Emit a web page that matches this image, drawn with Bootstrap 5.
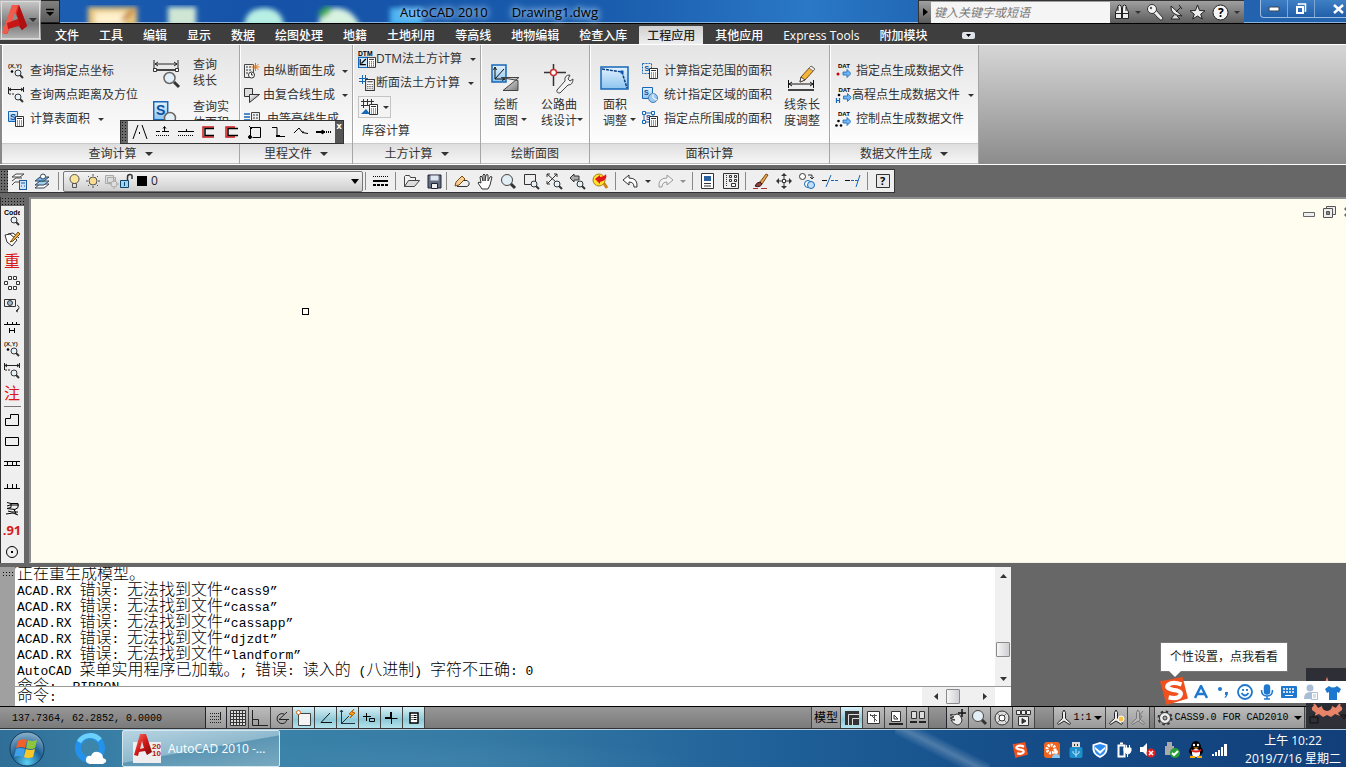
<!DOCTYPE html>
<html lang="zh-CN">
<head>
<meta charset="utf-8">
<meta name="viewport" content="width=device-width, initial-scale=1">
<title>AutoCAD 2010 Drawing1.dwg</title>
<link rel="stylesheet" href="https://cdn.jsdelivr.net/npm/bootstrap@5.3.0/dist/css/bootstrap.min.css">
<style>
:root{--ui:"Open Sans","Noto Sans CJK SC",sans-serif;--mono:"Liberation Mono","Noto Sans CJK SC",monospace}
body{font-family:var(--ui);font-size:12px;line-height:16px;color:#333;background:#676767;overflow:hidden}
svg{display:block;flex:none}
button,.btn{--bs-btn-padding-x:0;--bs-btn-padding-y:0;--bs-btn-font-size:12px;--bs-btn-line-height:16px;--bs-btn-border-width:0;--bs-btn-border-radius:0;--bs-btn-color:#333;--bs-btn-font-family:var(--ui);position:relative}
.btn{display:inline-flex;align-items:center;justify-content:center;flex:none}
.caret{width:0;height:0;border:3px solid transparent;border-top-color:#333;border-bottom:0;flex:none}
.caret-lg{border-width:4px 4px 0}

/* title bar */
.titlebar{height:24px;background:linear-gradient(90deg,#1e62b4,#1552a8 20%,#1a5cad 45%,#2a78c6 60%,#1d62b0 72%,#2463ae);border-bottom:1px solid #000;box-shadow:inset 0 -1px #8db4dc}
.desk{position:absolute;left:60px;top:0}
.quick{width:20px;height:23px;margin-left:40px;background:linear-gradient(#808080,#5a5a5a);border:1px solid #222}
.wtitle{color:#000;font-size:13px;padding-left:20px;text-shadow:0 0 5px #9cc6f0,0 0 8px #9cc6f0,0 0 8px #9cc6f0}
.info{background:linear-gradient(#a0a0a0,#5c5c5c);height:23px;width:326px;border-left:1px solid #333;border-top:1px solid #333}
.info input{width:179px;height:21px;border:0;border-radius:0;background:#f5f5f5;font-size:12px;line-height:16px;font-style:italic;padding:2px 3px;min-height:0}
.info input::placeholder{color:#777}
.info .opener{width:12px}
.winbtns{width:86px;height:18px;border:1px solid #9dbde0;border-top:0;border-right:0;border-radius:0 0 0 4px;background:linear-gradient(#3f7fc4,#2160aa)}
.winbtns .btn{width:27px;height:17px;border-right:1px solid #7fa7d6}
.winbtns .btn:last-child{width:44px;border:0}
.applogo{position:absolute;left:0;top:0;width:41px;height:40px;background:linear-gradient(#c9c9c9,#777 60%,#b5b5b5);border:1px solid #222;box-shadow:inset 0 0 0 1px #ddd;z-index:5;justify-content:flex-start}

/* menu */
.menubar{height:20px;background:#3e3e3e;padding-left:45px}
.menubar .nav-link{color:#fff;font-size:12px;line-height:16px;font-weight:500;padding:2px 8px 0;margin:2px 2px 0;height:18px;border-radius:0;white-space:nowrap}
.menubar .nav-link.active{color:#222;background:linear-gradient(#cfcfcf,#eee);border-radius:1px 1px 0 0}

/* ribbon */
.ribbon{height:121px;background:linear-gradient(#d6d6d6,#8c8c8c);border-top:1px solid #fff;border-bottom:1px solid #fff;padding-left:2px;box-shadow:inset 2px 0 #888}
.panel{height:119px;border-right:1px solid #a6a6a6;box-shadow:inset 1px 0 #fff}
.panel-body{height:98px;background:linear-gradient(#e4e4e4,#fdfdfd);padding:14px 0 0 5px;border-left:1px solid #fff}
.panel-foot{height:21px;background:linear-gradient(#dedede,#f6f6f6);border-top:1px solid #cacaca;border-bottom:1px solid #bbb}
.rowbtn{height:24px;gap:6px;justify-content:flex-start;white-space:nowrap}
.rowbtn .caret{margin-left:2px}
.sidebtn{height:42px;gap:12px;text-align:left;justify-content:flex-start;align-items:flex-start}
.sidebtn span{margin-top:-2px}
.bigbtn{flex-direction:column;height:72px;gap:2px;margin-top:4px;align-items:center;justify-content:flex-start;white-space:nowrap}
.bigbtn .caret{position:absolute;right:-6px;bottom:14px}
.p1{width:238px}.p2{width:113px}.p3{width:128px}.p4{width:109px}.p5{width:240px}.p6{width:149px}
.c1{width:145px}
.p2 .panel-body{padding-left:3px}.p2 .rowbtn{gap:3px}
.p3 .panel-body{padding:2px 0 0 4px}
.p4 .panel-body{padding-left:9px;gap:20px}
.p5 .panel-body{padding-left:9px}
.p6 .panel-body{padding-left:4px}.p6 .rowbtn{gap:5px}
.split{width:33px;height:22px;margin:1px 0;border:1px solid #c4c4c4;background:#f3f3f3;gap:5px}
.floatbar{position:absolute;left:120px;top:120px;width:224px;height:24px;border:1px solid #333;background:#f0f0f0;z-index:4}
.floatbar .btn{width:23px;height:22px}
.grip{background:radial-gradient(circle,#111 1px,transparent 1px) 0 0/3px 3px #6a6a6a}
.floatbar .grip{width:7px;height:22px}
.floatbar .closer{width:8px;height:22px;background:#555;color:#fff;font-size:9px;font-weight:700;line-height:10px;align-items:flex-start}

/* tool strip */
.strip{height:32px;padding-top:4px}
.toolrow{height:24px;background:#efefef;border:1px solid #333;border-left:0;width:max-content}
.toolrow>.grip{width:8px;height:22px}
.toolrow .btn{width:23px;height:22px}
.toolrow .btn.drop{width:12px}
.toolrow .btn.ltype{width:29px}
.sep{width:1px;height:18px;background:#888;margin:0 3px;flex:none}
.layer{width:300px;height:21px;border:1px solid #777;background:linear-gradient(#f4f4f4,#cfcfcf);padding:0 3px 0 4px;margin:0 2px 0 0;border-radius:2px}
.layer select{border:0;background:transparent;min-height:0;height:18px;padding:0 14px 0 4px;font:12px/16px var(--ui);color:#222;flex:1;min-width:0;appearance:none;background:url("data:image/svg+xml,%3Csvg xmlns='http://www.w3.org/2000/svg' width='8' height='5'%3E%3Cpath d='M0 0h8l-4 5z'/%3E%3C/svg%3E") right center no-repeat}

/* drawing area */
.work{min-height:0}
.sidebar-tools{width:24px;background:#efefef;border-left:1px solid #333;flex:none}
.sidebar-tools .grip{height:9px}
.sidebar-tools .btn{height:22px;width:22px}
.sidebar-tools hr{margin:2px 3px;border-color:#777;opacity:1;height:0}
.sidebar-tools .redcn{color:#d81818;--bs-btn-font-size:16px}
.sidebar-tools .rednum{color:#d81818;--bs-btn-font-size:13px;font-weight:700}
.canvas{background:#fffcf0;margin-left:5px;border:2px solid #8e8e8e;border-right:0;border-bottom-color:#f4f0e4;border-width:2px 0 1px 2px;min-height:0;outline:0}
.pick{position:absolute;left:271px;top:109px;width:7px;height:7px;border:1px solid #000}
.mdi{position:absolute;right:-10px;top:6px;gap:8px}

/* command line */
.cmd{height:139px;margin-top:4px}
.cmd-grip{width:15px;background:#a0a0a0;padding:4px 2px}
.cmd-grip i{display:block;height:5px;background:radial-gradient(circle,#111 1px,transparent 1px) 0 0/3px 3px}
.cmd-box{width:996px;background:#fff;color:#000;border-radius:3px 0 0 0}
.history{height:119px;overflow:hidden;padding:0 0 0 2px}
.history div{font:300 16px/16px var(--mono);height:16px;white-space:pre}
.history code,.cmd-in label code{font:13px/1px var(--mono);color:#000}
.vbar{width:16px;background:#f0f0f0;height:119px;padding:7px 0 5px}
.thumb{width:14px;height:15px;border:1px solid #8a8a8a;background:linear-gradient(90deg,#f6f6f6,#cfcfd3);border-radius:1px}
.vbar .thumb{margin:auto 0 20px}
.cmd-in{height:20px;border-top:1px solid #999}
.cmd-in label{font:300 16px/18px var(--mono);padding-left:2px}
.cmd-in input{border:0;height:18px;min-height:0;padding:0;flex:1;background:transparent;border-radius:0;font:13px/16px var(--mono)}
.hbar{width:73px;height:19px;background:#f0f0f0;margin-right:16px;padding:0 8px 0 12px}

/* status bar */
.status{height:23px;background:linear-gradient(#979797,#7a7a7a);border-top:1px solid #000;border-bottom:1px solid #333;font:10px/16px var(--mono);color:#000}
.status .coords{width:205px;padding:2px 0 0 12px}
.status .btn{height:21px;width:22px;border-right:1px solid #444;background:linear-gradient(#bdbdbd,#999);color:#000;--bs-btn-font-size:10px;--bs-btn-font-family:var(--mono)}
.status .btn.on{background:linear-gradient(#d9f0f5,#8fcad8 60%,#b4e3ec)}
.status .btn.cn{width:30px;--bs-btn-font-size:12px;--bs-btn-font-family:var(--ui);background:linear-gradient(#aaa,#909090);border-left:1px solid #444}
.status .gap{width:18px}
.status .scale{width:53px;gap:2px;border-left:1px solid #444}
.status .ws{width:151px;gap:1px;border-left:1px solid #444}
.status .under{width:41px}
.ws .caret,.scale .caret{border-top-color:#000}

/* taskbar */
.taskbar{height:38px;background:linear-gradient(27deg,transparent 38%,#ffffff3c 50%,transparent 62%) 895px 0/95px 38px no-repeat,radial-gradient(ellipse 260px 20px at 430px 30px,#4c8fb555,transparent),linear-gradient(90deg,#2f6e97,#3d86ab 12%,#357aa4 36%,#1f6099 58%,#154d89 76%,#123f79);border-top:1px solid #b5d0e2;color:#fff}
.start{margin-left:8px}.browser{margin-left:27px}
.task{width:158px;height:37px;border:1px solid #d4e6ee;background:linear-gradient(170deg,#b7d4e2,#8fb9cd 50%,#5c96b4 52%,#78a9c0);--bs-btn-color:#fff;--bs-btn-font-size:12px;justify-content:flex-start;gap:6px;padding-left:9px;border-radius:2px;margin-left:15px}
.tray{gap:8px;padding-top:2px}
.clock{width:100px;text-align:center;line-height:18px;color:#fff;margin:0 3px 0 7px;white-space:nowrap}

/* input method */
.tip{position:absolute;right:58px;bottom:95px;background:#fff;border:1px solid #777;width:128px;height:30px;line-height:28px;text-align:center;color:#222;z-index:7;white-space:nowrap}
.tip::after{content:"";position:absolute;left:8px;top:28px;border:6px solid transparent;border-top-color:#fff;border-bottom:0}
.ime{position:absolute;right:0;bottom:64px;width:174px;height:22px;background:#fff;z-index:7;padding-left:18px}
.ime .btn{width:22px;height:22px}
.imelogo{position:absolute;right:157px;bottom:61px;z-index:8}
.crab{position:absolute;right:0;bottom:38px;z-index:6}
</style>
</head>
<body class="d-flex flex-column vh-100 position-relative">

<svg width="0" height="0" class="position-absolute" aria-hidden="true">
<defs>
<linearGradient id="gBlue" x1="0" y1="0" x2="0" y2="1"><stop offset="0" stop-color="#e4f2fd"/><stop offset="1" stop-color="#8cc4f0"/></linearGradient>
<linearGradient id="gGray" x1="0" y1="0" x2="1" y2="1"><stop offset="0" stop-color="#fff"/><stop offset="1" stop-color="#777"/></linearGradient>
<linearGradient id="gRed" x1="0" y1="0" x2="1" y2="1"><stop offset="0" stop-color="#ff7a6a"/><stop offset=".5" stop-color="#d01818"/><stop offset="1" stop-color="#7a0808"/></linearGradient>
<symbol id="mag" viewBox="0 0 10 10"><circle cx="4" cy="4" r="3" fill="#e6f1f8" stroke="#333"/><path d="M6 6l3 3" stroke="#333" stroke-width="2"/></symbol>
<symbol id="bigmag" viewBox="0 0 17 17"><path d="M10 10l5 5" stroke="#333" stroke-width="3"/><circle cx="7" cy="7" r="5.500" fill="#e2eff6" stroke="#444"/></symbol>
<symbol id="calc" viewBox="0 0 9 11"><path d="M.5.5h8v10h-8z" fill="#fff" stroke="#333"/><path d="M2 2.500h5M2 5h1M4 5h1M6 5h1M2 7h1M4 7h1M6 7h1M2 9h1M4 9h1M6 9h1" stroke="#333"/></symbol>
<symbol id="xy" viewBox="0 0 16 16"><text x="0" y="5" font-size="6" font-weight="700" font-family="Liberation Sans" fill="#222">(X,Y)</text><circle cx="4" cy="8.500" r="1.300"/><use href="#mag" x="6" y="6" width="10" height="10"/></symbol>
<symbol id="dist" viewBox="0 0 16 16"><path d="M.5 0v7M15.500 0v5M1 2.500h14M3 1L1 2.500 3 4M13 1l2 1.500L13 4" fill="none" stroke="#222"/><path d="M1 7h6" stroke="#222" stroke-dasharray="2 1"/><use href="#mag" x="6" y="6" width="10" height="10"/></symbol>
<symbol id="scalc" viewBox="0 0 16 16"><path d="M.5.5h9v10h-9z" fill="url(#gBlue)" stroke="#1667b7"/><text x="2" y="9" font-size="9" font-weight="700" font-family="Liberation Sans" fill="#0b4f9e">S</text><use href="#calc" x="7" y="5" width="9" height="11"/></symbol>
<symbol id="bigdist" viewBox="0 0 28 32"><path d="M1 1v9M25 1v9M2 5h22M5 3L2 5l3 2M21 3l3 2-3 2" fill="none" stroke="#222"/><path d="M2 11h22" stroke="#444" stroke-width="2"/><path d="M.5 9.500h3v3h-3zM22.500 9.500h3v3h-3z" fill="#fff" stroke="#333"/><path d="M21 23l5 5" stroke="#333" stroke-width="3"/><circle cx="16.500" cy="19" r="5.500" fill="#e2eff6" stroke="#666" stroke-width="1.500"/></symbol>
<symbol id="bigS" viewBox="0 0 28 32"><path d="M.7.7h14v18H.7z" fill="url(#gBlue)" stroke="#1667b7" stroke-width="1.500"/><text x="3" y="14" font-size="14" font-weight="700" font-family="Liberation Sans" fill="#0b4f9e">S</text><circle cx="17" cy="17" r="5.500" fill="#e2eff6" stroke="#666" stroke-width="1.500"/></symbol>
<symbol id="m1" viewBox="0 0 16 16"><path d="M.5 1.500h9v13h-9z" fill="#eee" stroke="#444"/><path d="M2 4h2M2 7h2M2 10h2M5 4h2M5 7h2" stroke="#333"/><circle cx="7.500" cy="12" r="3" fill="#fff" stroke="#333"/><path d="M7.500 10v2H9" fill="none" stroke="#333"/><path d="M11.500 0v8M7.500 4h8M8.700 1.200l5.600 5.600M14.300 1.200L8.700 6.800" stroke="#e07818"/></symbol>
<symbol id="m2" viewBox="0 0 16 16"><path d="M.5 1.500h8v8h-8z" fill="#ddd" stroke="#333"/><path d="M5.500 15.500v-8h10z" fill="url(#gGray)" stroke="#333"/></symbol>
<symbol id="m3" viewBox="0 0 16 16"><path d="M0 3h6M0 6h6M0 9h6M0 12h6" fill="none" stroke="#1667b7" stroke-width="1.500"/><path d="M7.500 1.500h8v13h-8z" fill="#eee" stroke="#444"/><path d="M9 4h2M9 7h2M9 10h2M12 4h2M12 7h2" stroke="#333"/></symbol>
<symbol id="dtm" viewBox="0 0 16 16"><text x="0" y="5" font-size="6" font-weight="700" font-family="Liberation Sans" fill="#000">DTM</text><path d="M.5 6.500h8v9h-8z" fill="#cfe5f8" stroke="#1667b7"/><path d="M2 8v5h5M3 12l4-4" fill="none" stroke="#000"/><use href="#calc" x="8" y="6" width="8" height="10"/></symbol>
<symbol id="sect" viewBox="0 0 16 16"><path d="M3.500 0v9M6.500 0v6M0 3.500h9M0 6.500h6" stroke="#1667b7"/><use href="#calc" x="6" y="4" width="10" height="12"/></symbol>
<symbol id="gridc" viewBox="0 0 17 16"><path d="M2.500 0v9M6.500 0v7M10.500 0v5M0 2.500h13M0 6.500h9" stroke="#333"/><path d="M0 15l5-5 4 5z" fill="#1667b7"/><use href="#calc" x="8" y="5" width="9" height="11"/></symbol>
<symbol id="draw" viewBox="0 0 30 30"><path d="M1 1h14v17H1z" fill="url(#gBlue)" stroke="#1667b7" stroke-width="1.500"/><path d="M4 4v11h9M4 15L13 5M2.500 6L4 3l1.500 3M11 13.500l3 1.500-3 1.500" fill="none" stroke="#111"/><path d="M10 13.500h18L12 26.500h15v-10z" fill="url(#gGray)" stroke="#444"/></symbol>
<symbol id="road" viewBox="0 0 30 30"><path d="M9.500 0v22M0 8.500h22" stroke="#333" stroke-width="1.500"/><circle cx="9.500" cy="8.500" r="3" fill="#fff" stroke="#c33" stroke-width="1.500"/><path d="M13 26l8-9q-1-6 5-6l-2 4 2 2 3-2q0 6-5 6l-8 8q-4 0-3-3z" fill="#f4f4f4" stroke="#444"/></symbol>
<symbol id="areaadj" viewBox="0 0 30 30"><path d="M1 3h27v22H1z" fill="url(#gBlue)" stroke="#1667b7" stroke-width="1.500"/><path d="M2 5l20 3 5 16" fill="none" stroke="#0a3f86" stroke-width="1.500" stroke-dasharray="3 1"/><path d="M20.500 6.500h3v3h-3z" fill="#0a56b0"/></symbol>
<symbol id="a1" viewBox="0 0 16 16"><path d="M.5.5h9v10h-9z" fill="none" stroke="#1667b7" stroke-dasharray="2 1"/><text x="2.500" y="8" font-size="7" font-weight="700" font-family="Liberation Sans" fill="#0b4f9e">S</text><use href="#calc" x="7" y="5" width="9" height="11"/></symbol>
<symbol id="a2" viewBox="0 0 16 16"><path d="M.5.5h10v11H.5z" fill="url(#gBlue)" stroke="#1667b7"/><text x="2" y="8" font-size="7" font-weight="700" font-family="Liberation Sans" fill="#0b4f9e">S</text><circle cx="11" cy="11" r="4.500" fill="#9cc8ee" stroke="#4a7caf"/><path d="M11 11V6.500M11 11l4 2" stroke="#fff"/></symbol>
<symbol id="a3" viewBox="0 0 16 16"><path d="M2 2h9v9H2z" fill="none" stroke="#1667b7"/><path d="M.5.5h3v3h-3zM9.500.5h3v3h-3zM.5 9.500h3v3h-3z" fill="#fff" stroke="#1667b7"/><text x="4" y="9" font-size="7" font-weight="700" font-family="Liberation Sans" fill="#0b4f9e">S</text><use href="#calc" x="7" y="5" width="9" height="11"/></symbol>
<symbol id="pencil" viewBox="0 0 30 30"><path d="M14 13l10-11 4 3-10 11-5 2z" fill="#f4b63a" stroke="#7a4a10"/><path d="M24 2l4 3-2 2-4-3z" fill="#eee" stroke="#777"/><path d="M13 18l1-5 4 3z" fill="#fff" stroke="#444"/><path d="M1.500 16v8M26.500 16v8M2 20h24M5 18l-3 2 3 2M23 18l3 2-3 2" fill="none" stroke="#111"/><path d="M1 26h26" stroke="#444" stroke-width="2"/></symbol>
<symbol id="datb" viewBox="0 0 16 16"><text x="3" y="5" font-size="6" font-weight="700" font-family="Liberation Sans">DAT</text><path d="M8 9h4V6.500l4 4-4 4V12H8z" fill="#6db4f0" stroke="#1667b7" stroke-width=".8"/></symbol>
<symbol id="d1" viewBox="0 0 16 16"><use href="#datb" width="16" height="16"/><circle cx="3" cy="11" r="1.500" fill="#c00"/></symbol>
<symbol id="d2" viewBox="0 0 16 16"><use href="#datb" width="16" height="16"/><circle cx="3.500" cy="8" r="1.300"/><path d="M1 11v5M4 11v5M1 13.500h3" stroke="#1667b7" stroke-width="1.200"/></symbol>
<symbol id="d3" viewBox="0 0 16 16"><use href="#datb" width="16" height="16"/><circle cx="3.500" cy="10" r="1.300"/><circle cx="1.500" cy="14.500" r="1.300"/><circle cx="6" cy="14.500" r="1.300"/></symbol>
</defs>
</svg>

<header class="titlebar d-flex position-relative">
  <svg class="desk" width="400" height="23" viewBox="0 0 400 23"><defs><filter id="soft"><feGaussianBlur stdDeviation="2.500"/></filter></defs><g filter="url(#soft)"><path d="M28 7h49v19H28z" fill="#e8c47c"/><path d="M35 12h30v14H35z" fill="#fff1cc"/><path d="M62 20l12-10" stroke="#b86820" stroke-width="3"/><path d="M108 7h28v19h-28z" fill="#cfe6d4"/><path d="M184 26q2-18 20-18t20 18z" fill="#b8efe4"/><path d="M258 26q2-18 18-18t24 18z" fill="#d8f2e0"/><path d="M260 16l10-8" stroke="#3fae58" stroke-width="7"/><path d="M330 26V8h32v18z" fill="#4cb2f0"/></g></svg>
  <button class="btn quick" aria-label="快速访问"><svg width="10" height="8"><path d="M1 1.500h8" stroke="#000" stroke-width="1.500"/><path d="M1 4h8L5 8z"/></svg></button>
  <div class="wtitle flex-grow-1 d-flex justify-content-center align-items-center gap-4 position-relative"><span>AutoCAD 2010</span><span>Drawing1.dwg</span></div>
  <div class="info d-flex align-items-center position-relative">
    <button class="btn opener" aria-label="展开"><svg width="5" height="8"><path d="M0 0v8l5-4z"/></svg></button>
    <input class="form-control" aria-label="搜索" placeholder="键入关键字或短语">
    <div class="d-flex flex-grow-1 align-items-center justify-content-between px-1">
      <button class="btn" aria-label="搜索"><svg width="16" height="16" fill="#eee" stroke="#222"><path d="M3.500 4q0-3 2-3t2 3v10.500h-6V8zM8.500 4q0-3 2-3t2 3l2 4v6.500h-6z"/><path d="M1.500 9.500h13M7 5.500h2M4 3v4M12 3v4"/></svg></button><i class="caret"></i>
      <button class="btn" aria-label="密钥"><svg width="17" height="17"><path d="M9 6l7 8-1 2h-2l-1.500-2-1.500-.5-.5-1.500L6 9z" fill="#eee" stroke="#333"/><circle cx="5" cy="5" r="4.500" fill="#f4f4f4" stroke="#333"/><circle cx="4" cy="4" r="1.200" fill="#555"/></svg></button>
      <button class="btn" aria-label="通讯中心"><svg width="15" height="16"><path d="M2 2q-1 9 11 10z" fill="#eee" stroke="#222"/><path d="M7 8l5-5M10 1l3 4M5 11l-3 4h9l-3-3" fill="#ddd" stroke="#222"/></svg></button>
      <button class="btn" aria-label="收藏夹"><svg width="17" height="16"><path d="M8.500 1l2 5.500 5.500.3-4.300 3.400L13.300 15 8.500 12 3.700 15l1.600-4.800L1 6.800l5.500-.3z" fill="#eee" stroke="#222"/></svg></button>
      <button class="btn" aria-label="帮助"><svg width="17" height="17"><circle cx="8.500" cy="8.500" r="7.500" fill="#f5f5f5" stroke="#222"/><text x="6" y="13" font-size="12" font-weight="700" font-family="Open Sans">?</text></svg></button><i class="caret"></i>
    </div>
  </div>
  <div class="winbtns d-flex ms-3 position-relative">
    <button class="btn" aria-label="最小化"><svg width="12" height="6"><path d="M1 1h10v4H1z" fill="#fff" stroke="#345"/></svg></button>
    <button class="btn" aria-label="还原"><svg width="12" height="12" fill="none" stroke="#fff"><path d="M3.500 2V1h7v7h-1" stroke-width="1.500"/><path d="M2 4h6v6H2z" stroke-width="2"/></svg></button>
    <button class="btn" aria-label="关闭"><svg class="ms-1" width="12" height="10"><path d="M1 1l9 8M10 1L1 9" stroke="#fff" stroke-width="2.500"/></svg></button>
  </div>
  <button class="btn applogo" aria-label="应用程序菜单"><svg width="28" height="34" viewBox="0 0 28 34"><path d="M11 2h7l8 21-5 4-4-5-8 2-3 7-4-1z" fill="url(#gRed)"/><path d="M11 2h6l-3 9-5 12-3 8-5-1z" fill="#f25a4c"/><path d="M6 20l12-4 3 6-14 4z" fill="#c81616"/><path d="M14 9l3 7-6 2z" fill="#8f8f8f"/><path d="M18 2l8 21-5 4-3-8-2-8z" fill="#b01010"/></svg><i class="caret caret-lg"></i></button>
</header>

<nav class="menubar nav flex-nowrap align-items-start">
  <a class="nav-link" href="#">文件</a><a class="nav-link" href="#">工具</a><a class="nav-link" href="#">编辑</a><a class="nav-link" href="#">显示</a><a class="nav-link" href="#">数据</a><a class="nav-link" href="#">绘图处理</a><a class="nav-link" href="#">地籍</a><a class="nav-link" href="#">土地利用</a><a class="nav-link" href="#">等高线</a><a class="nav-link" href="#">地物编辑</a><a class="nav-link" href="#">检查入库</a><a class="nav-link active" href="#" aria-current="page">工程应用</a><a class="nav-link" href="#">其他应用</a><a class="nav-link" href="#">Express Tools</a><a class="nav-link" href="#">附加模块</a>
  <button class="btn ms-4 mt-2" aria-label="最小化功能区"><svg width="13" height="7"><rect width="13" height="7" rx="2" fill="#dfe3ea"/><path d="M4 2h5L6.500 5z"/></svg></button>
</nav>

<section class="ribbon d-flex">
  <div class="panel p1">
    <div class="panel-body d-flex">
      <div class="c1 d-flex flex-column align-items-start">
        <button class="btn rowbtn"><svg width="16" height="16"><use href="#xy"/></svg>查询指定点坐标</button>
        <button class="btn rowbtn"><svg width="16" height="16"><use href="#dist"/></svg>查询两点距离及方位</button>
        <button class="btn rowbtn"><svg width="16" height="16"><use href="#scalc"/></svg>计算表面积<i class="caret"></i></button>
      </div>
      <div class="d-flex flex-column">
        <button class="btn sidebtn"><svg width="28" height="32"><use href="#bigdist"/></svg><span>查询<br>线长</span></button>
        <button class="btn sidebtn"><svg width="28" height="32"><use href="#bigS"/></svg><span>查询实<br>体面积</span></button>
      </div>
    </div>
    <div class="panel-foot d-flex align-items-center justify-content-center gap-2">查询计算<i class="caret caret-lg"></i></div>
  </div>
  <div class="panel p2">
    <div class="panel-body d-flex flex-column align-items-start">
      <button class="btn rowbtn"><svg width="16" height="16"><use href="#m1"/></svg>由纵断面生成<i class="caret ms-1"></i></button>
      <button class="btn rowbtn"><svg width="16" height="16"><use href="#m2"/></svg>由复合线生成<i class="caret ms-1"></i></button>
      <button class="btn rowbtn"><svg width="16" height="16"><use href="#m3"/></svg><span class="ps-1">由等高线生成</span></button>
    </div>
    <div class="panel-foot d-flex align-items-center justify-content-center gap-2">里程文件<i class="caret caret-lg"></i></div>
  </div>
  <div class="panel p3">
    <div class="panel-body d-flex flex-column align-items-start">
      <button class="btn rowbtn gap-0"><svg width="18" height="18"><use href="#dtm"/></svg>DTM法土方计算<i class="caret ms-2"></i></button>
      <button class="btn rowbtn gap-0"><svg width="18" height="16"><use href="#sect"/></svg>断面法土方计算<i class="caret ms-2"></i></button>
      <button class="btn split" aria-label="方格网法"><svg width="17" height="16"><use href="#gridc"/></svg><i class="caret"></i></button>
      <button class="btn ms-1 mt-1">库容计算</button>
    </div>
    <div class="panel-foot d-flex align-items-center justify-content-center gap-2">土方计算<i class="caret caret-lg"></i></div>
  </div>
  <div class="panel p4">
    <div class="panel-body d-flex">
      <button class="btn bigbtn"><svg width="30" height="32"><use href="#draw"/></svg><span>绘断<br>面图</span><i class="caret"></i></button>
      <button class="btn bigbtn"><svg width="30" height="32"><use href="#road"/></svg><span>公路曲<br>线设计</span><i class="caret"></i></button>
    </div>
    <div class="panel-foot d-flex align-items-center justify-content-center">绘断面图</div>
  </div>
  <div class="panel p5">
    <div class="panel-body d-flex">
      <button class="btn bigbtn"><svg width="30" height="32"><use href="#areaadj"/></svg><span>面积<br>调整</span><i class="caret"></i></button>
      <div class="d-flex flex-column align-items-start mx-2 px-1">
        <button class="btn rowbtn"><svg width="16" height="16"><use href="#a1"/></svg>计算指定范围的面积</button>
        <button class="btn rowbtn"><svg width="16" height="16"><use href="#a2"/></svg>统计指定区域的面积</button>
        <button class="btn rowbtn"><svg width="16" height="16"><use href="#a3"/></svg>指定点所围成的面积</button>
      </div>
      <button class="btn bigbtn"><svg width="30" height="32"><use href="#pencil"/></svg><span>线条长<br>度调整</span></button>
    </div>
    <div class="panel-foot d-flex align-items-center justify-content-center">面积计算</div>
  </div>
  <div class="panel p6">
    <div class="panel-body d-flex flex-column align-items-start">
      <button class="btn rowbtn"><svg width="16" height="16"><use href="#d1"/></svg>指定点生成数据文件</button>
      <button class="btn rowbtn gap-0"><svg width="17" height="16"><use href="#d2"/></svg>高程点生成数据文件<i class="caret ms-2"></i></button>
      <button class="btn rowbtn"><svg width="16" height="16"><use href="#d3"/></svg>控制点生成数据文件</button>
    </div>
    <div class="panel-foot d-flex align-items-center justify-content-center gap-2">数据文件生成<i class="caret caret-lg"></i></div>
  </div>
</section>

<div class="floatbar d-flex" role="toolbar" aria-label="CASS">
  <i class="grip"></i>
  <button class="btn" aria-label="陡坎"><svg width="16" height="16" stroke="#000" fill="none"><path d="M1 15L6 1M15 15L10 1M7.500 8v2"/></svg></button>
  <button class="btn" aria-label="加固坎"><svg width="16" height="16" stroke="#000" fill="none"><path d="M1 7.500h4M7 7.500h7M9.500 7V3M8 4.500l1.500-2L11 4.500"/><path d="M1 11.500h14" stroke-dasharray="1 1"/></svg></button>
  <button class="btn" aria-label="围墙"><svg width="16" height="16" stroke="#000" fill="none"><path d="M0 7.500h16M8.500 5v3"/><path d="M0 11.500h16" stroke-dasharray="1 1"/></svg></button>
  <button class="btn" aria-label="隔点"><svg width="16" height="16" fill="none"><path d="M13 3H2v10h11" stroke="#d01818" stroke-width="1.500"/><path d="M13 4.500H4v7h9" stroke="#000" stroke-width="1.500"/></svg></button>
  <button class="btn" aria-label="闭合"><svg width="16" height="16" fill="none"><path d="M11 3H2v10h9" stroke="#d01818" stroke-width="1.500"/><path d="M14 4.500H4v7h10" stroke="#000" stroke-width="1.500"/></svg></button>
  <button class="btn" aria-label="微导线"><svg width="16" height="16" stroke="#000" fill="none"><path d="M3.500 13.500v-10h10v10h-8M2 2l3 3"/><circle cx="3" cy="13" r="1.500" fill="#000"/></svg></button>
  <button class="btn" aria-label="直角"><svg width="16" height="16" stroke="#000" fill="none"><path d="M2 3.500h5v9h8"/><path d="M6 12h4" stroke-width="2"/></svg></button>
  <button class="btn" aria-label="折线"><svg width="16" height="16" stroke="#000" fill="none"><path d="M1 9l5-5 3 4h2M9 8.500l6 1"/></svg></button>
  <button class="btn" aria-label="延伸"><svg width="16" height="16" stroke="#000" fill="none"><path d="M0 8h8" stroke-width="2"/><path d="M8 8h8" stroke-dasharray="1 1" stroke-width="2"/><path d="M6 6l3 2-3 2z" fill="#000"/></svg></button>
  <button class="btn closer ms-auto" aria-label="关闭">x</button>
</div>

<div class="strip">
  <div class="toolrow d-flex align-items-center" role="toolbar">
    <i class="grip"></i>
    <button class="btn" aria-label="图层特性"><svg width="17" height="17" fill="#fff" stroke="#444"><path d="M1 4l4-3h8l-4 3zM1 8l4-3h6M1 12l3-3h4"/><rect x="8.500" y="7.500" width="7" height="9" stroke="#1a5a9a" fill="#cfe3f5"/><path d="M10 10h4M10 13h1M13 13h1" stroke="#1a5a9a"/></svg></button>
    <button class="btn" aria-label="图层匹配"><svg width="17" height="17" fill="#fff" stroke="#345"><path d="M1 15l5-4h9l-5 4z"/><path d="M1 12l5-4h9l-5 4z" fill="#9fd0f0"/><path d="M1 8l5-4h9l-5 4z" fill="#6db4f0"/><circle cx="9" cy="3.500" r="2.500"/></svg></button>
    <i class="sep mx-1"></i>
    <div class="layer d-flex align-items-center">
      <svg width="14" height="16"><circle cx="6.500" cy="6" r="4.500" fill="#fde79a" stroke="#555"/><path d="M4.500 10.500h4v4h-4z" fill="#ddd" stroke="#555"/></svg>
      <svg class="ms-1" width="14" height="14"><circle cx="7" cy="7" r="4" fill="#fbdc8c" stroke="#555"/><path d="M7 0v2M7 12v2M0 7h2M12 7h2M2 2l1 1M11 11l1 1M12 2l-1 1M3 11l-1 1" stroke="#555"/></svg>
      <svg class="ms-1" width="15" height="15" fill="#ddd" stroke="#aaa"><path d="M1.500 1.500h8v8h-8zM3.500 3.500h8v5h-8z"/><circle cx="10" cy="10" r="3"/><path d="M10 5v2M10 13v2M5 10h2M13 10h2"/></svg>
      <svg width="14" height="16"><path d="M8.500 8V4q0-2.500 2.500-2.500T13 4v2" fill="none" stroke="#333" stroke-width="1.500"/><path d="M1.500 7.500h8v7h-8z" fill="#9fd4f2" stroke="#146"/><path d="M5.500 9v4" stroke="#146"/></svg>
      <svg class="ms-1" width="10" height="10"><path d="M0 0h10v10H0z"/></svg>
      <select class="form-select" aria-label="图层"><option>0</option></select>
    </div>
    <i class="sep m-0"></i>
    <button class="btn ltype" aria-label="线型"><svg width="15" height="12" stroke="#000"><path d="M0 1.500h15" stroke-dasharray="1 1"/><path d="M0 6h15" stroke-width="2"/><path d="M0 10h15" stroke-width="2" stroke-dasharray="3 1"/></svg></button>
    <i class="sep ms-0 me-1"></i>
    <button class="btn" aria-label="打开"><svg width="17" height="14" fill="#f2f2f2" stroke="#444"><path d="M1.500 12.500v-10l1-1h4l1 2h5v3"/><path d="M1.500 12.500l4-6h11l-5 6z" fill="#ddd"/></svg></button>
    <button class="btn" aria-label="保存"><svg width="15" height="15"><path d="M1 1h13v13H1z" fill="#667085" stroke="#223"/><path d="M3.500 1.500h8v5h-8z" fill="#dfe6ee"/><path d="M4.500 9.500h6v5h-6z" fill="#eee" stroke="#223"/></svg></button>
    <i class="sep mx-1 ms-0"></i>
    <button class="btn" aria-label="清除"><svg width="17" height="15" fill="none"><path d="M3 12.500h10q3-1 2-4t-5-2" stroke="#333"/><path d="M1 12l1-4 6-6 3 3-6 6z" fill="#f8cf90" stroke="#7a4a10"/></svg></button>
    <button class="btn" aria-label="平移"><svg width="17" height="17"><path d="M5 16q-2-3-4-6 0-2 3 0L3 4q1-2 2 0l1 4V2q1-2 2 0v6l1-6q1-1 2 0l0 6 2-4q1-1 2 0l-2 8-2 4z" fill="#fff" stroke="#333"/></svg></button>
    <button class="btn" aria-label="缩放"><svg width="17" height="17"><use href="#bigmag"/></svg></button>
    <button class="btn" aria-label="窗口缩放"><svg width="17" height="17"><path d="M1.500 1.500h11v10h-11z" fill="none" stroke="#333"/><use href="#mag" x="7" y="7" width="10" height="10"/></svg></button>
    <button class="btn" aria-label="范围缩放"><svg width="17" height="17"><path d="M1 4V1h3M1 1l9 8M11 1L1 11M8 1h3v3M1 8v3h3" fill="none" stroke="#333"/><use href="#mag" x="7" y="7" width="10" height="10"/></svg></button>
    <button class="btn" aria-label="上一个"><svg width="17" height="17"><path d="M1 5l4-4v2h5v4H5v2z" fill="#aaa" stroke="#333"/><use href="#mag" x="7" y="7" width="10" height="10"/></svg></button>
    <button class="btn" aria-label="重生成"><svg width="17" height="17"><path d="M11 9l4 6" stroke="#d08010" stroke-width="3"/><circle cx="7" cy="7" r="6" fill="#ffe030" stroke="#b08010"/><path d="M3 6l5-4v2q5-1 6-3 2 6-6 8v2z" fill="#e01818"/></svg></button>
    <i class="sep"></i>
    <button class="btn" aria-label="放弃"><svg width="17" height="14"><path d="M1 6l6-5v3q9 0 8 9h-3q0-5-5-5v3z" fill="#fff" stroke="#333"/></svg></button>
    <button class="btn drop" aria-label="放弃列表"><i class="caret"></i></button>
    <button class="btn" aria-label="重做"><svg width="17" height="14"><path d="M16 6l-6-5v3q-9 0-8 9h3q0-5 5-5v3z" fill="#f4f4f4" stroke="#999"/></svg></button>
    <button class="btn drop" aria-label="重做列表"><i class="caret opacity-50"></i></button>
    <i class="sep"></i>
    <button class="btn" aria-label="特性"><svg width="13" height="16"><path d="M.5.5h12v15H.5z" fill="#fff" stroke="#333"/><path d="M3 3h7v5H3z" fill="#2a5fa0"/><path d="M3 10.500h7M3 13h7" stroke="#333"/></svg></button>
    <button class="btn" aria-label="工具选项板"><svg width="16" height="16" fill="#fff" stroke="#333"><path d="M.5.5h15v15H.5z" fill="#eee"/><path d="M6.500 2.500h2v2h-2zM11.500 2.500h2v2h-2zM6.500 6.500h2v2h-2zM11.500 6.500h2v2h-2zM8.500 10.500h4v3h-4z"/><path d="M3.500 2v12" stroke-dasharray="1 1"/></svg></button>
    <i class="sep"></i>
    <button class="btn" aria-label="格式刷"><svg width="17" height="17"><path d="M8 9l6-8 2 1-6 9z" fill="#e8a850" stroke="#7a4a10"/><path d="M3 13q2-4 5-4l2 2q-2 4-7 2z" fill="#844" stroke="#411"/><path d="M1 15.500h5M9 15.500h6" stroke="#a33"/></svg></button>
    <button class="btn" aria-label="移动"><svg width="16" height="16"><path d="M8 0l3 3H5zM8 16l3-3H5zM0 8l3-3v6zM16 8l-3-3v6z" fill="#333"/><path d="M8 3v10M3 8h10" stroke="#333"/><path d="M6.500 6.500h3v3h-3z" fill="#fff" stroke="#333"/></svg></button>
    <button class="btn" aria-label="复制"><svg width="16" height="16" fill="#fff" stroke="#333"><circle cx="3.500" cy="3.500" r="3"/><path d="M9 2h4v4M11 4l2 2 2-2" fill="none"/><circle cx="9" cy="11" r="3.500" stroke="#1667b7"/><circle cx="12" cy="12" r="3.500" fill="#bfe0f8" stroke="#1667b7"/></svg></button>
    <button class="btn" aria-label="修剪"><svg width="16" height="14" stroke="#1667b7"><path d="M0 6.500h5" stroke="#111"/><path d="M4 13L9 1"/><path d="M9 6.500h7" stroke-dasharray="3 1"/></svg></button>
    <button class="btn" aria-label="延伸"><svg width="16" height="14" stroke="#1667b7"><path d="M0 6.500h5" stroke="#111"/><path d="M11 13l4-12"/><path d="M6 6.500h7" stroke-dasharray="3 1"/></svg></button>
    <i class="sep"></i>
    <button class="btn" aria-label="帮助"><svg width="14" height="14"><path d="M.5.5h13v13H.5z" fill="#e8e8e8" stroke="#333"/><text x="4" y="11" font-size="11" font-weight="700" font-family="Open Sans">?</text></svg></button>
  </div>
</div>

<div class="work d-flex flex-grow-1">
  <aside class="sidebar-tools d-flex flex-column" role="toolbar">
    <i class="grip"></i>
    <button class="btn" aria-label="编码查询"><svg width="16" height="18"><text x="0" y="7" font-size="7" font-weight="700" font-family="Liberation Sans">Code</text><use href="#mag" x="6" y="8" width="10" height="10"/></svg></button>
    <button class="btn" aria-label="标签编辑"><svg width="17" height="16"><path d="M1 4l5-1 7 6-5 6-5-4zM4 3l5-1 6 5" fill="#fff" stroke="#333"/><path d="M7 10l7-9 2 2-7 7-3 1z" fill="#f0b040" stroke="#7a4a10"/></svg></button>
    <button class="btn redcn">重</button>
    <button class="btn" aria-label="阵列"><svg width="16" height="16" fill="#fff" stroke="#333"><path d="M4.500 1.500h3v3h-3zM9.500 1.500h3v3h-3zM.5 6.500h3v3h-3zM12.500 6.500h3v3h-3zM4.500 11.500h3v3h-3zM9.500 11.500h3v3h-3z"/></svg></button>
    <button class="btn" aria-label="快照"><svg width="17" height="17" fill="#eee" stroke="#333"><path d="M.5 2.500h11v7H.5z"/><circle cx="6" cy="6" r="2.500" fill="#9bc"/><path d="M13 8q4 2 0 6M14 15l-2-1 2-2" fill="none"/></svg></button>
    <button class="btn" aria-label="坎"><svg width="16" height="14" stroke="#000" fill="none"><path d="M0 4.500h16M3.500 2v3M8.500 2v3M12.500 2v3M5.500 8v5M10.500 8v5M5 10.500h6"/></svg></button>
    <button class="btn" aria-label="查询坐标"><svg width="16" height="16"><use href="#xy"/></svg></button>
    <button class="btn" aria-label="查询距离"><svg width="16" height="16"><use href="#dist"/></svg></button>
    <button class="btn redcn">注</button>
    <hr>
    <button class="btn" aria-label="多点房屋"><svg width="14" height="14"><path d="M.5 12.500v-7h5v-4h8v11z" fill="none" stroke="#000"/></svg></button>
    <button class="btn" aria-label="四点房屋"><svg width="14" height="10"><path d="M.5.5h13v8H.5z" fill="none" stroke="#000"/></svg></button>
    <button class="btn" aria-label="围墙"><svg width="16" height="6"><path d="M0 .5h16M0 4.500h16M3.500 1v4M8.500 1v4M12.500 1v4" stroke="#000"/></svg></button>
    <button class="btn" aria-label="陡坎"><svg width="16" height="6"><path d="M0 5.500h16M3.500 1v4M8.500 1v4M12.500 1v4" stroke="#000"/></svg></button>
    <button class="btn" aria-label="斜坡"><svg width="15" height="15" fill="none" stroke="#000"><path d="M2 1.500l4 1h7M2 5l3-1h9M6 2.500v4l-4 1 8 1 3-2v-4M3 10l4 1h6M9 8l2 5M1 13l7-1 5 2"/></svg></button>
    <button class="btn rednum">.91</button>
    <button class="btn" aria-label="控制点"><svg width="12" height="12"><circle cx="6" cy="6" r="5.500" fill="none" stroke="#000"/><path d="M5 5h2v2H5z"/></svg></button>
  </aside>
  <main class="canvas flex-grow-1 position-relative overflow-hidden">
    <div class="mdi d-flex align-items-end">
      <button class="btn" aria-label="最小化"><svg width="12" height="14"><path d="M.5 7.500h11v4H.5z" fill="#eee" stroke="#666"/></svg></button>
      <button class="btn" aria-label="还原"><svg width="13" height="14" fill="#eee" stroke="#555"><path d="M3.500 1.500h9v8h-9z"/><path d="M.5 3.500h9v9h-9z"/><path d="M3.500 6.500h3v3h-3z" fill="#888"/></svg></button>
      <button class="btn" aria-label="关闭"><svg width="12" height="14"><path d="M1 3l9 8M10 3l-9 8" stroke="#666" stroke-width="3"/></svg></button>
    </div>
    <div class="pick"></div>
  </main>
</div>

<section class="cmd d-flex">
  <div class="cmd-grip"><i></i></div>
  <div class="cmd-box">
    <div class="d-flex">
      <div class="history flex-grow-1">
        <div>正在重生成模型。</div>
        <div><code>ACAD.RX </code>错误<code>: </code>无法找到文件<code>“cass9”</code></div>
        <div><code>ACAD.RX </code>错误<code>: </code>无法找到文件<code>“cassa”</code></div>
        <div><code>ACAD.RX </code>错误<code>: </code>无法找到文件<code>“cassapp”</code></div>
        <div><code>ACAD.RX </code>错误<code>: </code>无法找到文件<code>“djzdt”</code></div>
        <div><code>ACAD.RX </code>错误<code>: </code>无法找到文件<code>“landform”</code></div>
        <div><code>AutoCAD </code>菜单实用程序已加载。<code>; </code>错误<code>: </code>读入的<code> (</code>八进制<code>) </code>字符不正确<code>: 0</code></div>
        <div>命令<code>: _RIBBON</code></div>
      </div>
      <div class="vbar d-flex flex-column align-items-center"><svg width="7" height="4"><path d="M0 4l3.500-4L7 4z" fill="#333"/></svg><i class="thumb"></i><svg width="7" height="4"><path d="M0 0l3.500 4L7 0z" fill="#333"/></svg></div>
    </div>
    <div class="cmd-in d-flex align-items-center">
      <label for="cmdline">命令<code>:</code></label><input id="cmdline" class="form-control shadow-none">
      <div class="hbar d-flex align-items-center"><svg width="4" height="7"><path d="M4 0v7L0 3.500z" fill="#333"/></svg><i class="thumb ms-2"></i><svg class="ms-auto" width="4" height="7"><path d="M0 0v7l4-3.500z" fill="#333"/></svg></div>
    </div>
  </div>
</section>

<footer class="status d-flex align-items-center">
  <span class="coords">137.7364, 62.2852, 0.0000</span>
  <button class="btn border-start border-dark" aria-label="捕捉"><svg width="12" height="12" stroke="#222"><path d="M0 1.500h9M0 4.500h9M0 7.500h9M0 10.500h11" stroke-dasharray="1 1"/><path d="M10.500 0v8"/></svg></button>
  <button class="btn" aria-label="栅格"><svg width="16" height="16"><path d="M.5.500h15v15H.5zM3.500 0v16M6.500 0v16M9.500 0v16M12.500 0v16M0 3.500h16M0 6.500h16M0 9.500h16M0 12.500h16" stroke="#333" fill="#ddd"/></svg></button>
  <button class="btn" aria-label="正交"><svg width="16" height="16" fill="none" stroke="#222"><path d="M.5 0v15.500H16M.5 9.500h6v6"/></svg></button>
  <button class="btn" aria-label="极轴"><svg width="14" height="14" fill="none" stroke="#222"><path d="M12 8.500a5 5 0 1 1-3-5.500M4 8.500L12 1M4 8.500h10"/></svg></button>
  <button class="btn on" aria-label="对象捕捉"><svg width="16" height="16"><path d="M2.500 3.500h12v12h-12z" fill="#f4f4f4" stroke="#444"/><circle cx="2.500" cy="2.500" r="2" fill="#fff" stroke="#e06010"/></svg></button>
  <button class="btn on" aria-label="对象追踪"><svg width="13" height="12" fill="none" stroke="#111"><path d="M11 1L2 10.500h11"/></svg></button>
  <button class="btn on" aria-label="动态UCS"><svg width="17" height="17" fill="none" stroke="#234"><path d="M2.500 1v13.500H16M2 15l8-8M1 3l1.500-2L4 3"/><path d="M15 0l-5 5 3 1-2 3 5-5-3-1z" fill="#f4a020" stroke="#c06000"/></svg></button>
  <button class="btn on" aria-label="动态输入"><svg width="13" height="12" fill="none" stroke="#000"><path d="M0 4.500h8M3.500 1v8"/><path d="M6.500 6.500h5v3h-5z"/></svg></button>
  <button class="btn on" aria-label="线宽"><svg width="13" height="12" stroke="#000"><path d="M0 6h7M6 0v7" stroke-width="2"/><path d="M6.500 6.500h6M6.500 6v6"/></svg></button>
  <button class="btn on" aria-label="快捷特性"><svg width="10" height="12"><path d="M1 1h8v10H1z" fill="#fff" stroke="#000" stroke-width="1.500"/><path d="M2.500 3.500h1M4.500 3.500h3M2.500 5.500h1M4.500 5.500h3M2.500 7.500h1M4.500 7.500h3" stroke="#000"/></svg></button>
  <button class="btn cn ms-auto">模型</button>
  <button class="btn on" aria-label="布局"><svg width="14" height="14"><path d="M0 0h14v14H0z" fill="#333"/><path d="M3.500 14V3.500H14M7.500 14V7.500H14" fill="none" stroke="#ddd"/></svg></button>
  <button class="btn" aria-label="视图"><svg width="13" height="13"><path d="M.5.5h12v12H.5z" fill="#fff" stroke="#333"/><path d="M3 4.500h7M7.500 3v8M3 3l7 7" stroke="#555"/></svg></button>
  <button class="btn" aria-label="图纸"><svg width="14" height="14"><path d="M2.500.5h9v10h-9z" fill="#fff" stroke="#333"/><path d="M5 4v4h4z" stroke="#333" fill="none"/><path d="M0 13h14" stroke="#222" stroke-width="2"/></svg></button>
  <button class="btn" aria-label="快速查看"><svg width="16" height="13"><path d="M1.500.5h5v7h-5zM9.500.5h5v7h-5z" fill="#ddd" stroke="#333"/><path d="M0 11h7M9 11h7" stroke="#222" stroke-width="2"/></svg></button>
  <i class="gap border-end border-dark align-self-stretch"></i>
  <button class="btn" aria-label="平移"><svg width="17" height="17"><path d="M1 6q2-1 4 0l3-1q3 0 4 3l1 3q-1 5-5 5-4-1-6-5l4 0-5-2 4-1z" fill="#eee" stroke="#333"/><path d="M13 0v8M9 4h8" stroke="#111" stroke-width="1.500"/></svg></button>
  <button class="btn" aria-label="缩放"><svg width="17" height="17"><use href="#bigmag"/></svg></button>
  <button class="btn" aria-label="控制盘"><svg width="16" height="16" fill="#ddd" stroke="#333"><circle cx="8" cy="8" r="7"/><path d="M3 3l10 10M13 3L3 13" stroke="#777"/><circle cx="8" cy="8" r="3" fill="#fff"/></svg></button>
  <button class="btn" aria-label="运动"><svg width="16" height="16" fill="#eee" stroke="#333"><path d="M.5.500h4v4h-4zM5.500.500h4v4h-4zM10.500.500h4v4h-4zM2.500 6.500h10v9h-10z"/><path d="M6 8.500l4 2.500-4 2.500z" fill="#333"/></svg></button>
  <i class="gap align-self-stretch"></i>
  <button class="btn scale"><svg width="14" height="15"><path d="M7 0l1.500 2.500v6l5 4.500-1 1.500L7 11l-5.500 3.500-1-1.500 5-4.500v-6z" fill="#eee" stroke="#222"/></svg>1:1<i class="caret caret-lg"></i></button>
  <button class="btn" aria-label="注释可见性"><svg width="16" height="16"><path d="M7 0l1.500 2.500v6l5 4.500-1 1.500L7 11l-5.500 3.500-1-1.500 5-4.500v-6z" fill="#eee" stroke="#222"/><circle cx="12" cy="9" r="3" fill="#fdc040" stroke="#fff"/></svg></button>
  <button class="btn" aria-label="自动比例"><svg width="16" height="16"><path d="M7 0l1.500 2.500v6l5 4.500-1 1.500L7 11l-5.500 3.500-1-1.500 5-4.500v-6z" fill="#bbb" stroke="#777"/><path d="M12 1L8 6l3 0-3 5" fill="none" stroke="#777"/></svg></button>
  <span class="ps-1"></span>
  <button class="btn ws"><svg width="16" height="16"><circle cx="8" cy="8" r="6.500" fill="none" stroke="#333" stroke-width="2" stroke-dasharray="2.500 2.600"/><circle cx="8" cy="8" r="5.500" fill="#eee" stroke="#333"/><circle cx="8" cy="8" r="2" fill="#aaa" stroke="#333"/></svg>CASS9.0 FOR CAD2010<i class="caret caret-lg ms-1"></i></button>
  <i class="under"></i>
</footer>

<nav class="taskbar d-flex align-items-center">
  <button class="btn start" aria-label="开始"><svg width="38" height="36" viewBox="0 0 38 36"><defs><radialGradient id="orb" cx=".5" cy=".9" r=".9"><stop offset="0" stop-color="#5cd0f4"/><stop offset=".5" stop-color="#1d5f94"/><stop offset="1" stop-color="#8fb4cc"/></radialGradient></defs><circle cx="19" cy="18" r="17" fill="url(#orb)" stroke="#123a5c"/><path d="M10 10q4-3 9-1l-2 8q-4-2-9 0z" fill="#f0602c"/><path d="M20 9q4 2 9 0l-2 8q-4 2-9 0z" fill="#8cc63f"/><path d="M8 18q4-2 9 0l-2 8q-4-2-9 0z" fill="#3fa0e8"/><path d="M18 18q4 2 9 0l-2 8q-5 2-9 0z" fill="#fcc828"/></svg></button>
  <button class="btn browser" aria-label="QQ浏览器"><svg width="34" height="34" viewBox="0 0 34 34"><circle cx="17" cy="16" r="12" fill="#3d86ab" stroke="#2492ec" stroke-width="6"/><path d="M6 10a13 13 0 0 1 21-2" stroke="#6cd0fc" stroke-width="5" fill="none"/><path d="M17 32q-5-1-4-5t5-3q2-5 7-4t5 6q4 1 3 4l-3 2z" fill="#fff"/></svg></button>
  <button class="btn task"><svg width="30" height="32" viewBox="0 0 30 32"><path d="M1 9h28v21H1z" fill="#eee"/><path d="M8 1h6l6 18-5 3-2-4-6 1-1 4-4-1z" fill="url(#gRed)"/><path d="M10 8l2 7-4 1z" fill="#ddd"/><text x="20" y="16" font-size="8" font-weight="700" font-family="Liberation Sans" fill="#b02020">20</text><text x="20" y="23" font-size="8" font-weight="700" font-family="Liberation Sans" fill="#b02020">10</text></svg>AutoCAD 2010 -...</button>
  <div class="tray d-flex align-items-center ms-auto">
    <button class="btn me-2" aria-label="搜狗输入法"><svg width="16" height="16" viewBox="0 0 28 28"><path d="M1 4l22-4 5 22-22 6z" fill="#f0501e"/><path d="M21 8q-8-3-12 0t4 5q9 1 7 5t-11 2" fill="none" stroke="#fff" stroke-width="4"/></svg></button>
    <button class="btn" aria-label="设置"><svg width="16" height="16"><rect width="16" height="16" rx="3" fill="#f0641e"/><circle cx="7" cy="7" r="4" fill="none" stroke="#fff" stroke-width="3" stroke-dasharray="2 1"/><circle cx="12" cy="10" r="2" fill="#fff"/><path d="M8 16q0-4 4-4t4 4z" fill="#8cc8f0"/></svg></button>
    <button class="btn" aria-label="USB"><svg width="16" height="16"><path d="M4 0h8v6H4z" fill="#ddd"/><path d="M6 2h1v2H6zM9 2h1v2H9z" fill="#333"/><rect x="1.500" y="5" width="13" height="11" rx="2" fill="#1d90cc"/><path d="M8 7v8M5 9v2l3 2 3-2V9" fill="none" stroke="#bfe4f8"/></svg></button>
    <button class="btn" aria-label="电脑管家"><svg width="16" height="16"><path d="M8 0l7.500 2.500v5Q15 13 8 16 1 13 .5 7.500v-5z" fill="#fff"/><path d="M8 2l5.500 1.500v4Q13 12 8 14 3 12 2.500 7.500v-4z" fill="#2c8cf0"/><path d="M3 5l5 4 5-4v2l-5 5-5-5z" fill="#fff"/></svg></button>
    <button class="btn" aria-label="电源"><svg width="16" height="16" fill="none" stroke="#fff"><path d="M2.500 3.500h6v11h-6z" stroke-width="2"/><path d="M4 1.500h3" stroke-width="2"/><path d="M8 6h7v3q-1 3-3 3t-4-3z" fill="#fff"/><path d="M10.500 3v3M13.500 3v3M11.500 12v3"/></svg></button>
    <button class="btn" aria-label="音量"><svg width="16" height="16"><path d="M0 5h3l4-4v13l-4-4H0z" fill="#fff"/><circle cx="11" cy="11" r="4.500" fill="#e02020"/><path d="M9 9l4 4M13 9l-4 4" stroke="#fff" stroke-width="1.500"/></svg></button>
    <button class="btn" aria-label="移除硬件"><svg width="16" height="16"><path d="M3 0h5v4H3zM1 4h9v9H1z" fill="#aaa"/><circle cx="11" cy="11" r="5" fill="#25a036"/><path d="M8 11l2 2 4-4" fill="none" stroke="#fff" stroke-width="2"/></svg></button>
    <button class="btn" aria-label="QQ"><svg width="16" height="17"><ellipse cx="8" cy="6" rx="5" ry="6"/><ellipse cx="8" cy="10" rx="7" ry="5"/><ellipse cx="8" cy="12" rx="4" ry="4" fill="#fff"/><path d="M3 8q5 3 10 0v2q-5 3-10 0z" fill="#e02020"/><circle cx="6" cy="4" r="1.200" fill="#fff"/><circle cx="10" cy="4" r="1.200" fill="#fff"/><path d="M5 6.500h6L8 8z" fill="#fa0"/><path d="M2 15h5v2H2zM9 15h5v2H9z" fill="#fa0"/></svg></button>
    <button class="btn" aria-label="网络"><svg width="16" height="14" fill="#fff"><path d="M0 11h2v2H0zM3 9h2v4H3zM6 7h2v6H6zM9 4h2v9H9zM12 1h3v12h-3z"/></svg></button>
    <div class="clock">上午 10:22<br>2019/7/16 星期二</div>
  </div>
</nav>

<div class="tip" role="tooltip">个性设置，点我看看</div>
<svg class="imelogo" width="30" height="30" viewBox="0 0 28 28"><path d="M1 5l21-4 5 20-20 6z" fill="#f0501e"/><path d="M21 8q-8-3-12 0t4 5q9 1 7 5t-11 2" fill="none" stroke="#fff" stroke-width="4"/></svg>
<div class="ime d-flex">
  <button class="btn" aria-label="英文"><svg width="14" height="14" fill="none" stroke="#1f78d0" stroke-width="2.500"><path d="M1 13L7 1l6 12M3 9h8"/></svg></button>
  <button class="btn" aria-label="标点"><svg width="10" height="12" fill="#1f78d0"><circle cx="2" cy="3" r="2"/><path d="M7 6h3q0 4-3 6l-.5-1Q8 10 8 9H7z"/></svg></button>
  <button class="btn" aria-label="表情"><svg width="16" height="16" fill="none" stroke="#1f78d0" stroke-width="1.800"><circle cx="8" cy="8" r="7"/><path d="M4.500 9q3.500 5 7 0M6 5v2M10 5v2"/></svg></button>
  <button class="btn" aria-label="语音"><svg width="14" height="16" fill="none" stroke="#1f78d0" stroke-width="1.500"><rect x="4.500" y="1" width="5" height="9" rx="2.500" fill="#1f78d0"/><path d="M1.500 6q0 6 5.500 6t5.500-6M7 12v3M4 15h6"/></svg></button>
  <button class="btn" aria-label="软键盘"><svg width="16" height="13"><rect width="16" height="12" rx="1" fill="#1f78d0"/><path d="M2 3h12M2 6h12" stroke="#fff" stroke-width="1.500" stroke-dasharray="2 1"/><path d="M4 9.500h8" stroke="#fff"/></svg></button>
  <button class="btn" aria-label="用户"><svg width="15" height="16" fill="#a9bdd6"><circle cx="6" cy="4" r="3.500"/><path d="M0 15q0-7 6-7 4 0 5 2v5z"/><path d="M7.500 8.500h6v7h-6z" fill="#fff" stroke="#a9bdd6"/><path d="M9 11h3M9 13h3" stroke="#a9bdd6"/></svg></button>
  <button class="btn" aria-label="皮肤"><svg width="16" height="15"><path d="M4 1q4 3 8 0l4 3-2 4-2-1v8H4V7L2 8 0 4z" fill="#1f78d0"/></svg></button>
</div>
<svg class="crab" width="40" height="61" viewBox="0 0 40 61"><path d="M0 0h40v61H0z" fill="#292b33" opacity=".94"/><path d="M20 15l1-3 1 3M8 36l4 6M34 36l-4 6" stroke="#e8826a" stroke-width="2"/><path d="M6 42q-1-4 4-5l2 3 4-2q5-4 10 0l4 2 2-3q5 1 4 5l-4 3 2 3-5-2-4 3-4-2-4 2-4-3-5 2 2-3z" fill="#e88468"/><circle cx="21" cy="38" r="5" fill="#292b33"/><path d="M4 49h8v6H4zM8 49v-3M35 47h5l-2 4z" fill="none" stroke="#111"/></svg>

<script src="https://cdn.jsdelivr.net/npm/bootstrap@5.3.0/dist/js/bootstrap.bundle.min.js"></script>
</body>
</html>
